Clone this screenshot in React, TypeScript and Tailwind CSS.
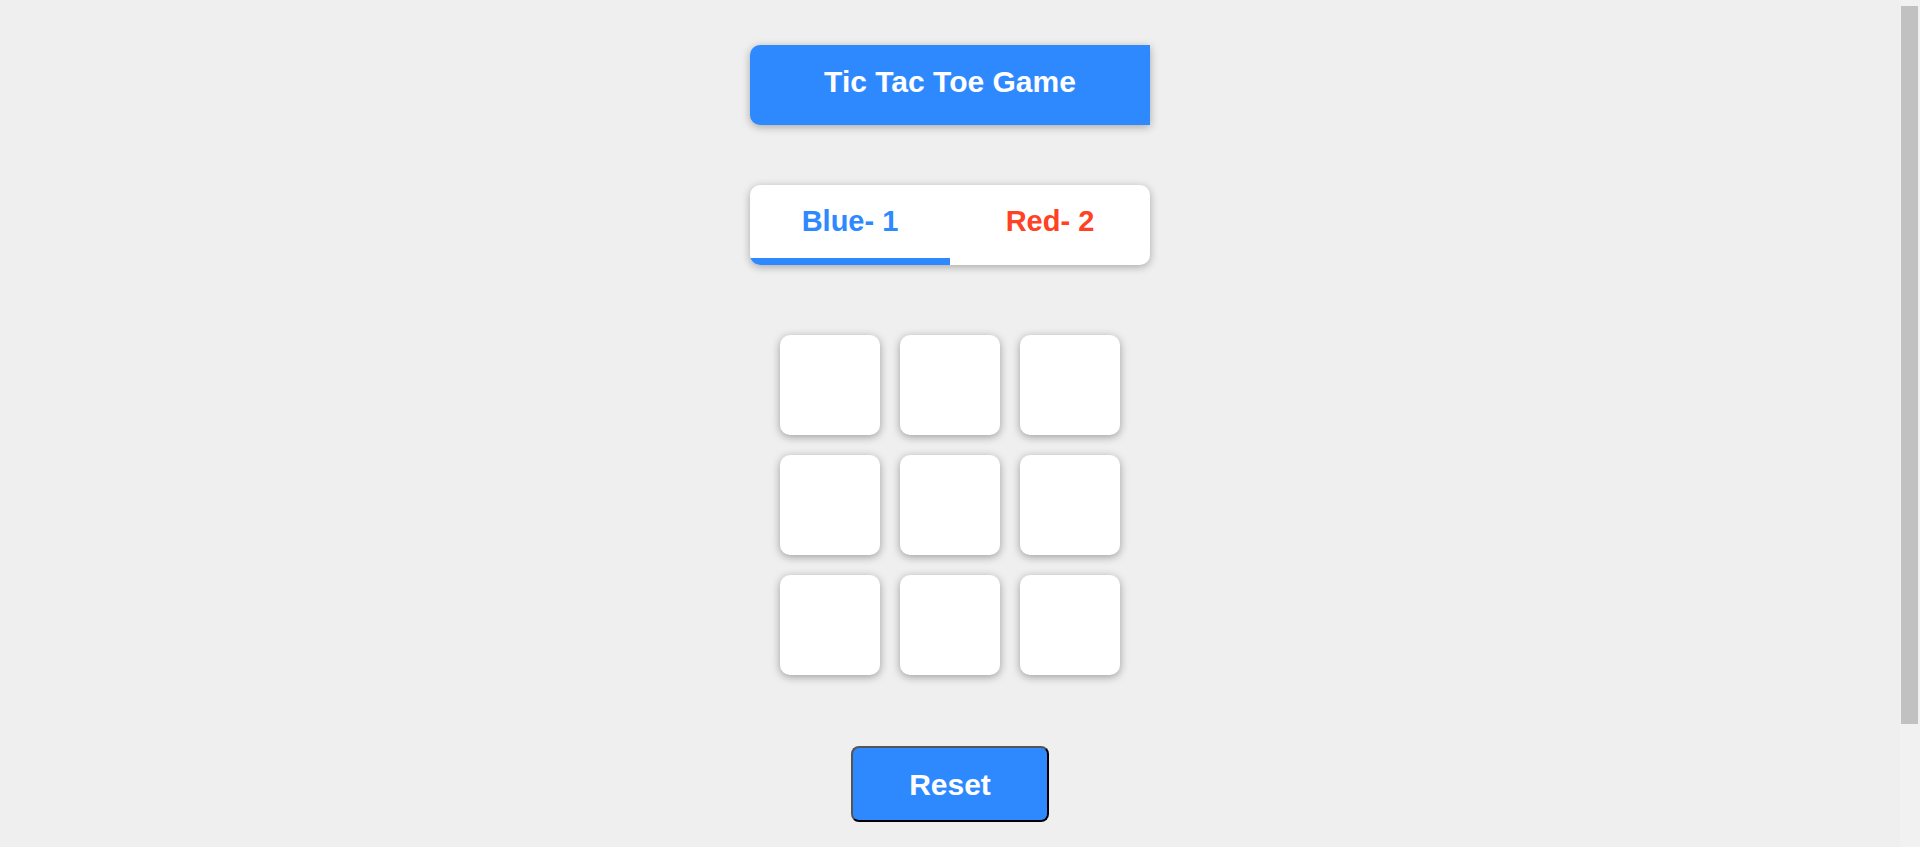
export default function App() {
  const cells = Array.from({ length: 9 }, (_, i) => i);

  return (
    <div className="h-screen overflow-hidden flex bg-[#efefef] font-['Liberation_Sans',Arial,sans-serif]">
      <main className="flex-1 flex flex-col items-center pt-[45px]">
        {/* Title */}
        <div className="w-[400px] h-[80px] rounded-l-[10px] bg-[#2e89ff] shadow-[0_2px_8px_rgba(0,0,0,0.3)] flex justify-center pt-[20px]">
          <h1 className="text-[30px] leading-[34px] font-bold text-white">
            Tic Tac Toe Game
          </h1>
        </div>

        {/* Score */}
        <div className="mt-[60px] w-[400px] h-[80px] rounded-[10px] bg-white shadow-[0_2px_8px_rgba(0,0,0,0.3)] overflow-hidden flex flex-col">
          <div className="flex flex-1 pt-[19px]">
            <div className="w-1/2 text-center text-[29px] leading-[34px] font-bold text-[#2e89ff]">
              Blue- 1
            </div>
            <div className="w-1/2 text-center text-[29px] leading-[34px] font-bold text-[#ff4124]">
              Red- 2
            </div>
          </div>
          <div className="w-1/2 h-[7px] bg-[#2e89ff]"></div>
        </div>

        {/* Board */}
        <div className="mt-[70px] grid grid-cols-3 gap-[20px]">
          {cells.map((c) => (
            <button
              key={c}
              className="size-[100px] rounded-[10px] bg-white shadow-[0_2px_8px_rgba(0,0,0,0.35)]"
            ></button>
          ))}
        </div>

        {/* Reset */}
        <button className="mt-[71px] w-[198px] h-[76px] rounded-[8px] bg-[#2e89ff] border-2 border-t-[#555] border-l-[#555] border-r-black border-b-black text-white text-[30px] font-bold">
          Reset
        </button>
      </main>

      {/* scrollbar */}
      <aside className="w-[20px] bg-[#f1f1f1] pt-[6px] pl-[1px] pr-[2px]">
        <div className="h-[718px] bg-[#c1c1c1]"></div>
      </aside>
    </div>
  );
}
